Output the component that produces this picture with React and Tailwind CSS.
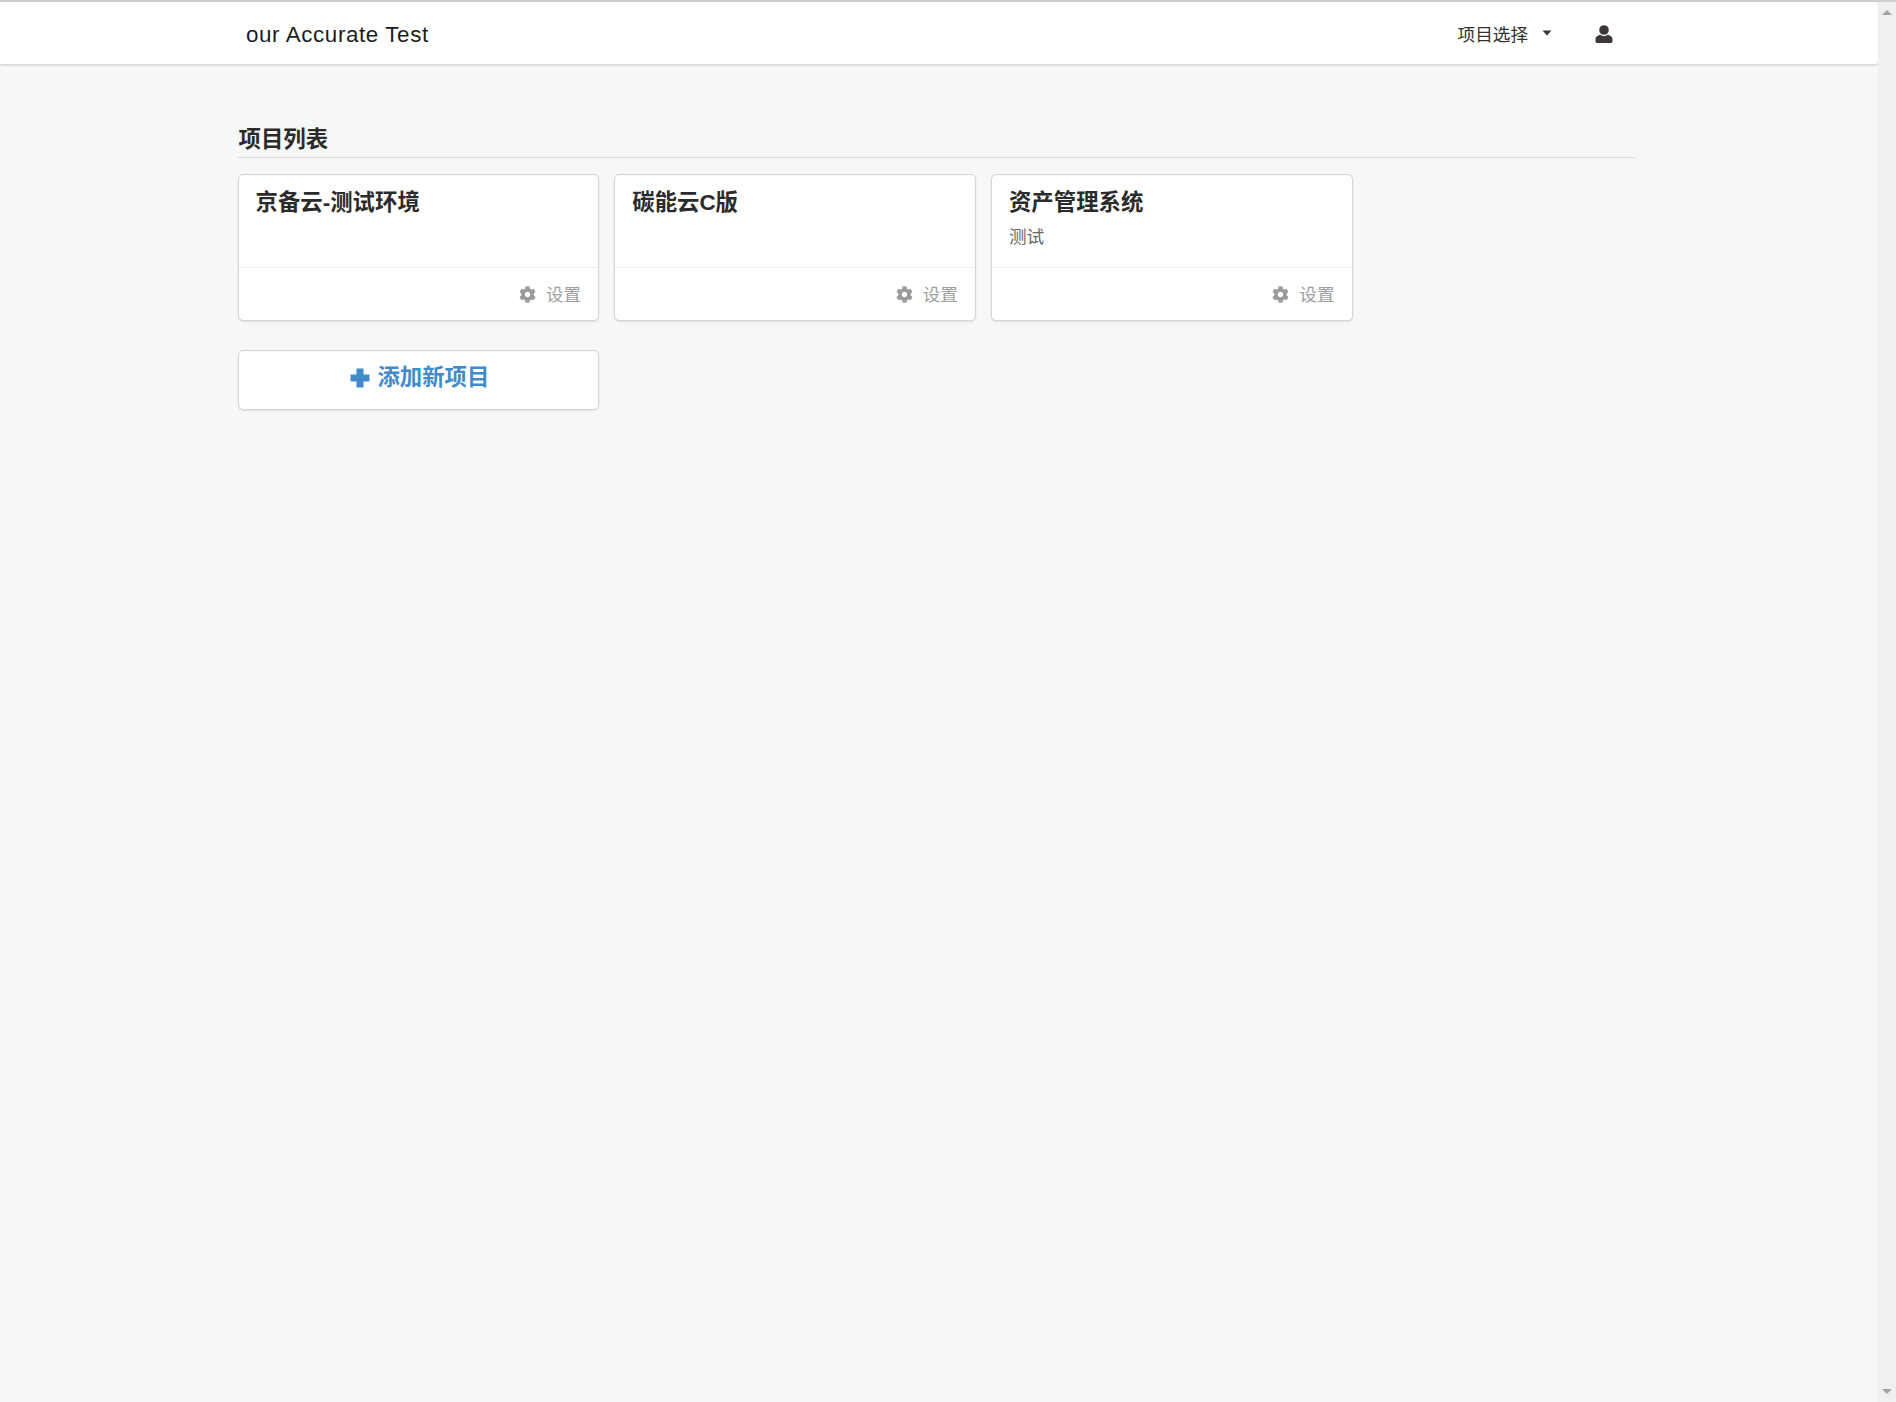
import React from "react";
import { FaCog } from "react-icons/fa";

function Card({ title, desc }) {
  return (
    <div className="w-[361.6px] h-[147px] flex flex-col bg-white border border-[#d4d4d4] rounded-[5px] shadow-[0_1px_2px_rgba(0,0,0,0.1)]">
      <div className="h-[93px] px-[17px] pt-[12px] border-b border-[#eeeeee]">
        <div className="text-[22.4px] leading-[32px] font-bold text-[#2b2b2b]">{title}</div>
        {desc && <div className="text-[17.6px] leading-[24px] mt-[6px] text-[#666666]">{desc}</div>}
      </div>
      <div className="flex-1 flex items-center justify-end gap-[10px] pr-[17px] pt-[2px] text-[#a0a0a0]">
        <FaCog className="w-[17px] h-[17px] text-[#9b9b9b] -mt-[1px]" />
        <span className="text-[17.6px] leading-[24px]">设置</span>
      </div>
    </div>
  );
}

export default function App() {
  return (
    <div className="w-[1896px] h-[1402px] flex flex-col overflow-hidden bg-[#f6f8f8] font-['Liberation_Sans','Noto_Sans_CJK_SC',sans-serif] text-[#333333]">
      <div className="h-[2px] bg-[#cfcfcf]" />
      <div className="flex-1 flex min-h-0">
        <div className="flex-1 min-w-0 flex flex-col">
          <header className="h-[62px] bg-white shadow-[0_1px_3px_rgba(0,0,0,0.2)] flex items-center pl-[246px] pr-[265px] rounded-r-[3px]">
            <div className="text-[22.4px] tracking-[0.6px] text-[#1c1c1c] pt-[3px]">our Accurate Test</div>
            <div className="ml-auto flex items-center text-[#333333]">
              <span className="text-[17.6px] leading-[24px] pt-[3px]">项目选择</span>
              <svg className="ml-[14px] w-[10px] h-[6px]" viewBox="0 0 10 6"><path d="M0.500 0.500h9L5 5.500z" fill="#403838" /></svg>
              <svg className="ml-[43px] mt-[1px] w-[18px] h-[18px]" viewBox="0 0 18 18">
                <circle cx="9" cy="5" r="4.800" fill="#403838" />
                <path d="M0.500 14c0-2.600 3-4 5-4.300C6.500 10.600 7.700 11 9 11s2.500-.4 3.500-1.300c2 .3 5 1.700 5 4.300v2.200c0 1-.8 1.800-1.800 1.800H2.300c-1 0-1.800-.8-1.800-1.800z" fill="#403838" />
              </svg>
            </div>
          </header>
          <main className="pl-[237.6px] pr-[242px]">
            <h2 className="mt-[60px] h-[34px] pl-[1px] pt-[1px] text-[22.4px] leading-[30px] font-bold text-[#2b2b2b] border-b border-[#dcdcdc] box-border">项目列表</h2>
            <div className="mt-[16px] flex gap-[15.1px]">
              <Card title="京备云-测试环境" />
              <Card title="碳能云C版" />
              <Card title="资产管理系统" desc="测试" />
            </div>
            <button className="mt-[29px] w-[361.6px] h-[60px] pb-[4px] pl-[3px] flex items-center justify-center gap-[7px] bg-white border border-[#d4d4d4] rounded-[5px] shadow-[0_1px_2px_rgba(0,0,0,0.1)] text-[#428bca] font-bold text-[22.4px]">
              <svg className="w-[20px] h-[20px]" viewBox="0 0 20 20"><path d="M6.500 .5h7v6h6v7h-6v6h-7v-6h-6v-7h6z" fill="#428bca" /></svg>
              <span className="leading-[32px]">添加新项目</span>
            </button>
          </main>
        </div>
        <div className="w-[18px] bg-[#f0f0f0] flex flex-col items-center justify-between py-[8px] shrink-0">
          <svg className="w-[10px] h-[5px]" viewBox="0 0 10 5"><path d="M5 0l5 5H0z" fill="#a3a3a3" /></svg>
          <svg className="w-[10px] h-[5px]" viewBox="0 0 10 5"><path d="M0 0h10L5 5z" fill="#a3a3a3" /></svg>
        </div>
      </div>
    </div>
  );
}
